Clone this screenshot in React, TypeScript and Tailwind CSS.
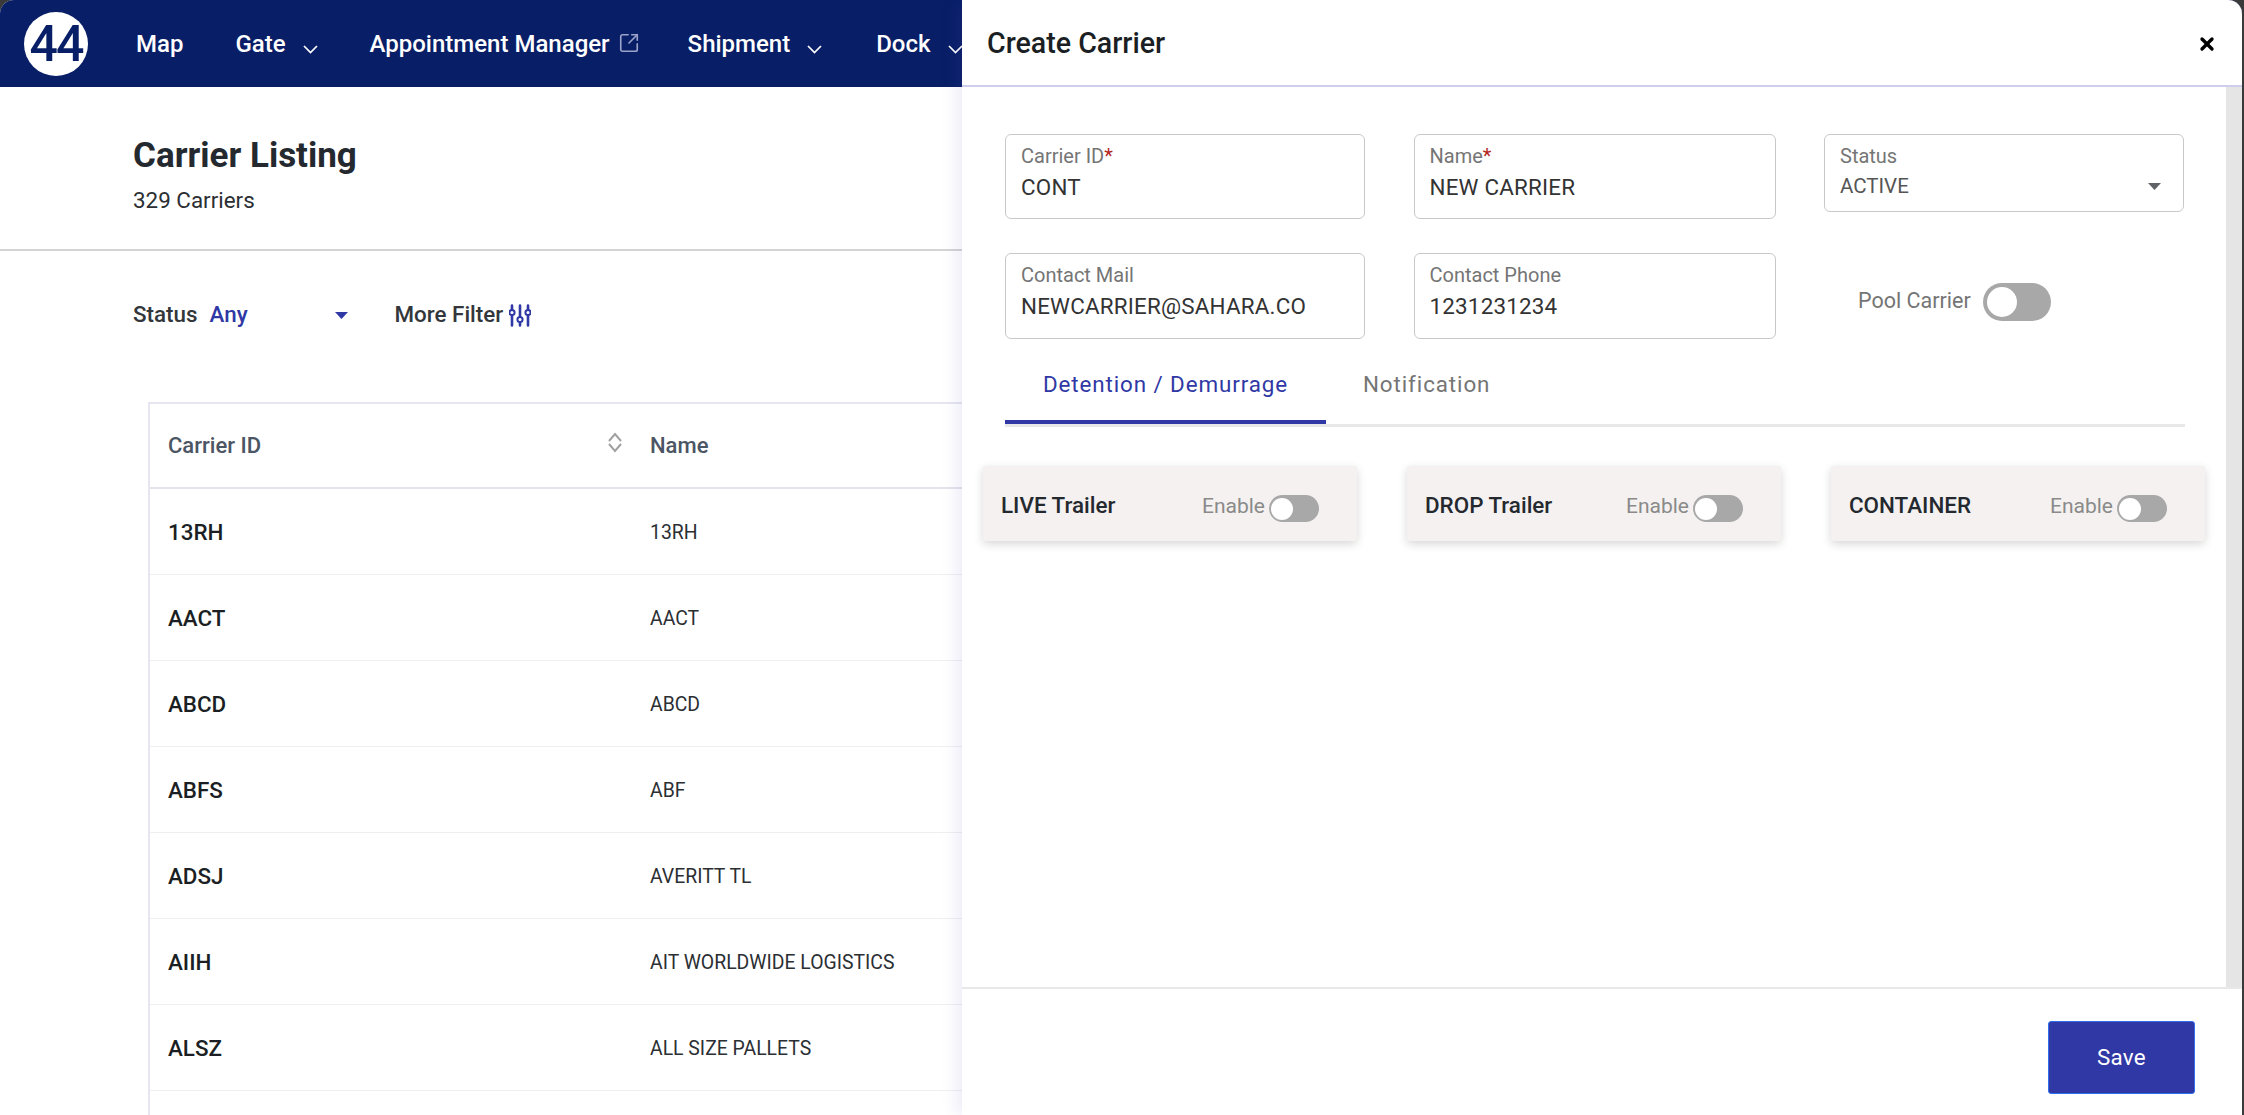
import { SquareArrowOutUpRight, X } from "lucide-react";

const carriers = [
  ["13RH", "13RH"],
  ["AACT", "AACT"],
  ["ABCD", "ABCD"],
  ["ABFS", "ABF"],
  ["ADSJ", "AVERITT TL"],
  ["AIIH", "AIT WORLDWIDE LOGISTICS"],
  ["ALSZ", "ALL SIZE PALLETS"],
];

// Small filter icon, three sliders
const SliderIcon = () => (
  <svg width="22" height="23" viewBox="0 0 22 23" fill="none" stroke="#3038a5" strokeWidth="2.6" strokeLinecap="round">
    <path d="M3 1.500v3.500M3 12v9.500M11 1.500v10.500M11 19v2.500M19 1.500v3.500M19 12v9.500" />
    <circle cx="3" cy="8.500" r="2.600" strokeWidth="2" />
    <circle cx="11" cy="15.500" r="2.600" strokeWidth="2" />
    <circle cx="19" cy="8.500" r="2.600" strokeWidth="2" />
  </svg>
);

const Caret = ({ color }: { color: string }) => (
  <svg width="13" height="7" viewBox="0 0 13 7" fill={color}>
    <path d="M0 0h13L6.500 7z" />
  </svg>
);

const NavChevron = () => (
  <svg width="15" height="9" viewBox="0 0 15 9" fill="none" stroke="white" strokeWidth="1.700" className="mt-[11px] ml-[17px] shrink-0">
    <path d="M1 1l6.500 6.500L14 1" />
  </svg>
);

const SortIcon = () => (
  <svg width="16" height="21" viewBox="0 0 16 21" fill="none" stroke="#a0a0a0" strokeWidth="2">
    <path d="M2 9l6-7 6 7M2 12l6 7 6-7" />
  </svg>
);

const Field = ({ label, value, required, tall }: { label: string; value: string; required?: boolean; tall?: boolean }) => (
  <div className={`${tall ? "h-[86px]" : "h-[85px]"} rounded-[6px] border border-[#c9c9c9] px-[15px] pt-[9px]`}>
    <div className="text-[20px] leading-[24px] text-[#757575]">
      {label}
      {required && <span className="text-[#b3261e]">*</span>}
    </div>
    <div className="mt-[6px] text-[22.400px] leading-[26px] tracking-[0.2px] text-[#333]">{value}</div>
  </div>
);

const Toggle = ({ big }: { big?: boolean }) =>
  big ? (
    <div className="flex h-[38px] w-[68px] items-center rounded-full bg-[#a8a8a8] pl-[4px]">
      <div className="h-[30px] w-[30px] rounded-full bg-white" />
    </div>
  ) : (
    <div className="mt-[10px] flex h-[27px] w-[50px] items-center rounded-full bg-[#a8a8a8] pl-[2px]">
      <div className="h-[22px] w-[22px] rounded-full bg-white" />
    </div>
  );

const TrailerCard = ({ title }: { title: string }) => (
  <div className="flex h-[75px] w-[374px] items-center rounded-[2px] bg-[#f4f1f0] pr-[38px] pl-[18px] shadow-[0_3px_10px_rgba(0,0,0,0.16)]">
    <div className="mt-[4px] flex-1 text-[22.400px] font-medium text-[#24292f]">{title}</div>
    <div className="mt-[6px] mr-[4px] text-[21px] text-[#8a8a8a]">Enable</div>
    <Toggle />
  </div>
);

export default function App() {
  return (
    <div className="h-screen w-full overflow-hidden bg-[#3a3a3a] pr-[2px] font-['Roboto',sans-serif]">
      <div className="relative h-full overflow-hidden rounded-t-[14px] bg-white">
        {/* Page behind the panel */}
        <header className="flex h-[87px] items-center bg-[#081e66] pl-[24px] text-white">
          <div className="flex h-[64px] w-[64px] items-center justify-center rounded-full bg-white text-[50px] leading-none tracking-[-2px] font-medium text-[#081e66]">
            44
          </div>
          <nav className="mt-[1px] ml-[48px] flex items-center whitespace-nowrap text-[24px] font-medium">
            <span>Map</span>
            <span className="ml-[52px]">Gate</span>
            <NavChevron />
            <span className="ml-[52px]">Appointment Manager</span>
            <SquareArrowOutUpRight size={22} strokeWidth={1.8} className="mb-[3px] ml-[8px] text-[#9aa3c9]" />
            <span className="ml-[48px]">Shipment</span>
            <NavChevron />
            <span className="ml-[54px]">Dock</span>
            <NavChevron />
          </nav>
        </header>

        <section className="h-[164px] border-b-2 border-[#d4d4d4] pt-[47px] pl-[133px]">
          <h1 className="text-[35px] leading-[44px] font-bold text-[#24292f]">Carrier Listing</h1>
          <p className="mt-[8px] text-[22.400px] leading-[28px] text-[#2b2f33]">329 Carriers</p>
        </section>

        {/* Filter row */}
        <div className="mb-[23px] flex h-[128px] items-center pl-[133px] text-[22.400px]">
          <span className="font-medium text-[#33373b]">Status</span>
          <span className="ml-[12px] w-[125px] font-medium text-[#3038a5]">Any</span>
          <Caret color="#3038a5" />
          <span className="ml-[47px] font-medium text-[#33373b]">More Filter</span>
          <div className="ml-[6px]">
            <SliderIcon />
          </div>
        </div>

        {/* Table */}
        <div className="ml-[148px] border-t-2 border-l-2 border-[#e6e6f0]">
          <div className="flex h-[85px] items-center border-b-2 border-[#e4e4ea] text-[22px] font-medium text-[#4b5563]">
            <div className="relative w-[500px] pl-[18px]">
              Carrier ID
              <div className="absolute top-[3px] left-[457px]">
                <SortIcon />
              </div>
            </div>
            <div>Name</div>
          </div>
          {carriers.map(([id, name]) => (
            <div key={id} className="flex h-[86px] items-center border-b border-[#efeff2] pt-[2px]">
              <div className="w-[500px] pl-[18px] text-[22.400px] font-medium text-[#1b1f24]">{id}</div>
              <div className="text-[19.400px] text-[#2b2f33]">{name}</div>
            </div>
          ))}
          <div className="h-[40px]" />
        </div>

        {/* Create Carrier slide-over */}
        <aside className="absolute top-0 right-0 bottom-0 flex w-[1280px] flex-col bg-white shadow-[-6px_0_14px_rgba(90,80,200,0.1)]">
          <div className="flex h-[87px] shrink-0 items-center justify-between border-b-2 border-[#cfcdee] pt-[2px] pr-[25px] pl-[25px]">
            <h2 className="text-[28.600px] font-medium text-[#1b1f24]">Create Carrier</h2>
            <X size={20} strokeWidth={4} className="text-black" />
          </div>

          <div className="flex min-h-0 flex-1 border-b-2 border-[#e8e8e8]">
            <div className="flex-1 pt-[47px] pl-[21px]">
              <div className="ml-[22px] grid w-[1180px] grid-cols-[360px_362px_360px] items-start gap-x-[48.500px] gap-y-[34px]">
                <Field label="Carrier ID" value="CONT" required />
                <Field label="Name" value="NEW CARRIER" required />
                <div className="flex h-[78px] flex-col rounded-[6px] border border-[#c9c9c9] px-[15px] pt-[9px]">
                  <div className="text-[20px] leading-[24px] text-[#757575]">Status</div>
                  <div className="mt-[5px] flex items-center justify-between pr-[7px] text-[20.500px] leading-[26px] text-[#555]">
                    ACTIVE
                    <Caret color="#5f6368" />
                  </div>
                </div>
                <Field label="Contact Mail" value="NEWCARRIER@SAHARA.CO" tall />
                <Field label="Contact Phone" value="1231231234" tall />
                <div className="flex items-start gap-[12px] pt-[30px] pl-[34px]">
                  <span className="mt-[2px] text-[21.500px] text-[#757575]">Pool Carrier</span>
                  <Toggle big />
                </div>
              </div>

              <div className="mt-[18px] ml-[22px] flex h-[70px] w-[1180px] border-b-[3px] border-[#e8e8e8] text-[22.400px] tracking-[0.900px]">
                <div className="flex w-[321px] items-start justify-center border-b-4 border-[#3038a5] pt-[11px] text-[#3038a5]">
                  Detention / Demurrage
                </div>
                <div className="ml-[37px] pt-[11px] text-[#757575]">Notification</div>
              </div>

              <div className="mt-[39px] flex gap-[50px]">
                <TrailerCard title="LIVE Trailer" />
                <TrailerCard title="DROP Trailer" />
                <TrailerCard title="CONTAINER" />
              </div>
            </div>
            <div className="w-[16px] shrink-0 bg-[#e5e5e5]" />
          </div>

          <div className="flex h-[126px] shrink-0 justify-end pt-[32px] pr-[47px]">
            <button className="h-[73px] w-[147px] rounded-[3px] border border-[#2f6fed] bg-[#3038a5] text-[22.400px] tracking-[0.3px] text-white">
              Save
            </button>
          </div>
        </aside>
      </div>
    </div>
  );
}
